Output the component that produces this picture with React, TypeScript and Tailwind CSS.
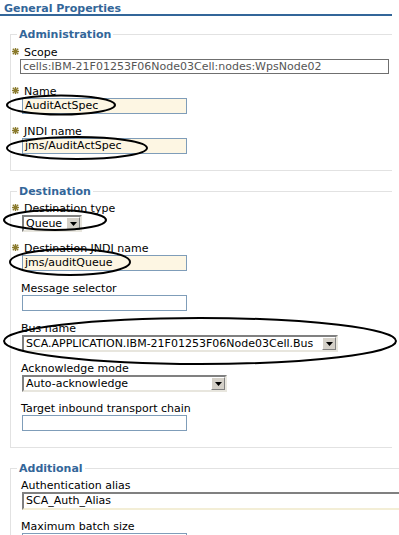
import type { ReactNode } from 'react';

const Ast = () => (
  <span className="inline-flex w-[12px] -ml-[9px] h-[13px] items-center">
    <svg width="7" height="7" viewBox="0 0 7 7" className="-mt-[2px]">
      <g stroke="#8a7a2c" strokeWidth="1.4" strokeLinecap="square">
        <line x1="3.5" y1="0.5" x2="3.5" y2="6.5" />
        <line x1="0.5" y1="3.5" x2="6.5" y2="3.5" />
        <line x1="1.3" y1="1.3" x2="5.7" y2="5.7" />
        <line x1="5.7" y1="1.3" x2="1.3" y2="5.7" />
      </g>
    </svg>
  </span>
);

function Label({ text, required, mt }: { text: string; required?: boolean; mt: string }) {
  return (
    <div className={`flex h-[13px] leading-[13px] pl-[10px] text-black ${mt}`}>
      {required && <Ast />}
      <span>{text}</span>
    </div>
  );
}

function TextBox({ value, cream, w = 'w-[165px]' }: { value?: string; cream?: boolean; w?: string }) {
  return (
    <div
      className={`ml-[11px] h-[16px] ${w} border border-[#7f9db9] px-[2px] leading-[14px] text-black whitespace-nowrap overflow-hidden ${
        cream ? 'bg-[#fdf6e3]' : 'bg-white'
      }`}
    >
      {value}
    </div>
  );
}

function Select({ value, w }: { value: string; w: string }) {
  return (
    <div className={`ml-[11px] h-[17px] ${w} flex border-2 border-t-[#808080] border-l-[#808080] border-b-[#e8e6de] border-r-[#e8e6de] bg-white`}>
      <div className="flex-1 px-[2px] leading-[13px] whitespace-nowrap overflow-hidden">{value}</div>
      <div className="w-[14px] h-[13px] bg-[#d4d0c8] border border-t-white border-l-white border-b-[#808080] border-r-[#808080] flex items-center justify-center">
        <svg width="7" height="4" viewBox="0 0 7 4">
          <path d="M0 0 H7 L3.5 4 Z" fill="#000" />
        </svg>
      </div>
    </div>
  );
}

function Group({ title, children, mt, pb }: { title: string; children: ReactNode; mt: string; pb: string }) {
  return (
    <fieldset className={`ml-[10px] w-[382px] border border-r-0 border-[#e2e2e2] ${mt} ${pb}`}>
      <legend className="ml-[6px] px-[2px] font-bold text-[#336699] leading-[13px]">{title}</legend>
      {children}
    </fieldset>
  );
}

export default function App() {
  return (
    <div
      className="relative w-[399px] h-[535px] overflow-hidden bg-white text-[11px]"
      style={{ fontFamily: '"DejaVu Sans", Verdana, sans-serif' }}
    >
      <div className="w-[392px] h-[16px] pt-[3px] pl-[4px] leading-[11px] font-bold text-[#336699] border-b-2 border-[#336699]">
        General Properties
      </div>

      <Group title="Administration" mt="mt-[12px]" pb="pb-[16px]">
        <Label text="Scope" required mt="mt-[5px]" />
        <div className="ml-[9px] h-[15px] w-[369px] border border-[#6f6f6f] px-[2px] leading-[13px] text-[#555] whitespace-nowrap overflow-hidden">
          cells:IBM-21F01253F06Node03Cell:nodes:WpsNode02
        </div>
        <Label text="Name" required mt="mt-[11px]" />
        <TextBox value="AuditActSpec" cream />
        <Label text="JNDI name" required mt="mt-[11px]" />
        <TextBox value="jms/AuditActSpec" cream />
      </Group>

      <Group title="Destination" mt="mt-[14px]" pb="pb-[16px]">
        <Label text="Destination type" required mt="mt-[4px]" />
        <Select value="Queue" w="w-[60px]" />
        <Label text="Destination JNDI name" required mt="mt-[10px]" />
        <TextBox value="jms/auditQueue" cream />
        <Label text="Message selector" mt="mt-[11px]" />
        <TextBox />
        <Label text="Bus name" mt="mt-[11px]" />
        <Select value="SCA.APPLICATION.IBM-21F01253F06Node03Cell.Bus" w="w-[316px]" />
        <Label text="Acknowledge mode" mt="mt-[10px]" />
        <Select value="Auto-acknowledge" w="w-[205px]" />
        <Label text="Target inbound transport chain" mt="mt-[10px]" />
        <TextBox />
      </Group>

      <Group title="Additional" mt="mt-[14px]" pb="pb-[16px]">
        <Label text="Authentication alias" mt="mt-[4px]" />
        <div className="ml-[11px] h-[18px] w-[400px] border-2 border-r-0 border-t-[#808080] border-l-[#808080] border-b-[#f3eed6] px-[2px] leading-[14px] bg-white">
          SCA_Auth_Alias
        </div>
        <Label text="Maximum batch size" mt="mt-[10px]" />
        <TextBox />
      </Group>

      <svg className="absolute left-0 top-0 pointer-events-none" width="399" height="535" viewBox="0 0 399 535">
        <g fill="none" stroke="#000" strokeWidth="2">
          <ellipse cx="61" cy="105" rx="54" ry="9.5" />
          <ellipse cx="77" cy="148" rx="70" ry="11" />
          <ellipse cx="55" cy="220" rx="51" ry="10" />
          <ellipse cx="70" cy="262" rx="60" ry="13" />
          <ellipse cx="200" cy="341" rx="196" ry="23" />
        </g>
      </svg>
    </div>
  );
}
